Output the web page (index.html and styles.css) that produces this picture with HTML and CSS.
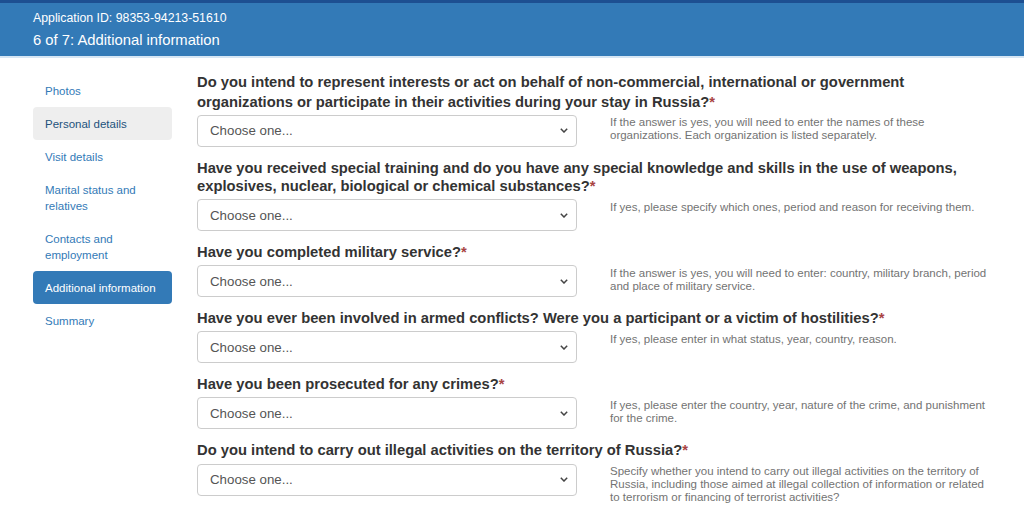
FILE: index.html
```html
<!DOCTYPE html>
<html lang="en">
<head>
    <meta charset="UTF-8">
    <meta name="viewport" content="width=device-width, initial-scale=1.0">
    <title>Additional information</title>
    <link rel="stylesheet" href="styles.css">
</head>
<body>
    <header class="top">
        <div class="app-id">Application ID: 98353-94213-51610</div>
        <div class="step">6 of 7: Additional information</div>
    </header>

    <div class="page">
        <nav class="steps">
            <a href="#">Photos</a>
            <a href="#" class="hover">Personal details</a>
            <a href="#">Visit details</a>
            <a href="#">Marital status and relatives</a>
            <a href="#">Contacts and employment</a>
            <a href="#" class="active">Additional information</a>
            <a href="#">Summary</a>
        </nav>

        <form class="questions">
            <div class="question">
                <label class="first">Do you intend to represent interests or act on behalf of non-commercial, international or government organizations or participate in their activities during your stay in Russia?<span class="req">*</span></label>
                <div class="row">
                    <div class="select">Choose one...<svg viewBox="0 0 8 5" width="8" height="5"><path d="M.8 .8 4 4 7.2 .8" fill="none" stroke="#444" stroke-width="1.5"/></svg></div>
                    <p class="hint">If the answer is yes, you will need to enter the names of these organizations. Each organization is listed separately.</p>
                </div>
            </div>

            <div class="question">
                <label>Have you received special training and do you have any special knowledge and skills in the use of weapons, explosives, nuclear, biological or chemical substances?<span class="req">*</span></label>
                <div class="row">
                    <div class="select">Choose one...<svg viewBox="0 0 8 5" width="8" height="5"><path d="M.8 .8 4 4 7.2 .8" fill="none" stroke="#444" stroke-width="1.5"/></svg></div>
                    <p class="hint">If yes, please specify which ones, period and reason for receiving them.</p>
                </div>
            </div>

            <div class="question">
                <label>Have you completed military service?<span class="req">*</span></label>
                <div class="row">
                    <div class="select">Choose one...<svg viewBox="0 0 8 5" width="8" height="5"><path d="M.8 .8 4 4 7.2 .8" fill="none" stroke="#444" stroke-width="1.5"/></svg></div>
                    <p class="hint">If the answer is yes, you will need to enter: country, military branch, period and place of military service.</p>
                </div>
            </div>

            <div class="question">
                <label>Have you ever been involved in armed conflicts? Were you a participant or a victim of hostilities?<span class="req">*</span></label>
                <div class="row">
                    <div class="select">Choose one...<svg viewBox="0 0 8 5" width="8" height="5"><path d="M.8 .8 4 4 7.2 .8" fill="none" stroke="#444" stroke-width="1.5"/></svg></div>
                    <p class="hint">If yes, please enter in what status, year, country, reason.</p>
                </div>
            </div>

            <div class="question">
                <label>Have you been prosecuted for any crimes?<span class="req">*</span></label>
                <div class="row">
                    <div class="select">Choose one...<svg viewBox="0 0 8 5" width="8" height="5"><path d="M.8 .8 4 4 7.2 .8" fill="none" stroke="#444" stroke-width="1.5"/></svg></div>
                    <p class="hint">If yes, please enter the country, year, nature of the crime, and punishment for the crime.</p>
                </div>
            </div>

            <div class="question">
                <label>Do you intend to carry out illegal activities on the territory of Russia?<span class="req">*</span></label>
                <div class="row">
                    <div class="select">Choose one...<svg viewBox="0 0 8 5" width="8" height="5"><path d="M.8 .8 4 4 7.2 .8" fill="none" stroke="#444" stroke-width="1.5"/></svg></div>
                    <p class="hint">Specify whether you intend to carry out illegal activities on the territory of Russia, including those aimed at illegal collection of information or related to terrorism or financing of terrorist activities?</p>
                </div>
            </div>
        </form>
    </div>
</body>
</html>
```

FILE: styles.css
```css
body {
    margin: 0;
    font-family: 'Liberation Sans', Arial, sans-serif;
    background: #fff;
    color: #333;
}

.top {
    background: #337ab7;
    border-top: 3px solid #1d4f91;
    border-bottom: 2px solid #d6e6f4;
    color: #fff;
    padding: 6px 33px 2px;
}

.app-id {
    font-size: 12.3px;
    line-height: 18px;
}

.step {
    font-size: 14.8px;
    line-height: 27px;
}

.page {
    display: flex;
    padding: 15px 0 0 33px;
}

.steps {
    width: 139px;
    flex-shrink: 0;
    display: flex;
    flex-direction: column;
    margin-top: 1px;
}

.steps a {
    display: block;
    padding: 8.5px 12px;
    font-size: 11.5px;
    line-height: 16px;
    color: #337ab7;
    text-decoration: none;
    border-radius: 4px;
}

.steps a.hover {
    background: #eeeeee;
    color: #23527c;
}

.steps a.active {
    background: #337ab7;
    color: #fff;
}

.questions {
    margin-left: 25px;
    width: 795px;
}

.question {
    margin-bottom: 12px;
}

.question label {
    display: block;
    font-weight: bold;
    font-size: 14.75px;
    line-height: 18.5px;
    color: #333;
    margin-bottom: 3.6px;
}

.question label.first {
    line-height: 19.5px;
    margin-bottom: 2.6px;
}

.req {
    color: #a94442;
}

.row {
    display: flex;
    gap: 33px;
    align-items: flex-start;
}

.select {
    width: 380px;
    height: 32px;
    box-sizing: border-box;
    border: 1px solid #ccc;
    border-radius: 4px;
    padding: 0 8px 0 12px;
    display: flex;
    align-items: center;
    justify-content: space-between;
    font-size: 13.3px;
    color: #555;
    flex-shrink: 0;
}

.hint {
    margin: 0;
    padding-top: 1.5px;
    width: 380px;
    font-size: 11.5px;
    line-height: 13px;
    color: #737373;
}
```
